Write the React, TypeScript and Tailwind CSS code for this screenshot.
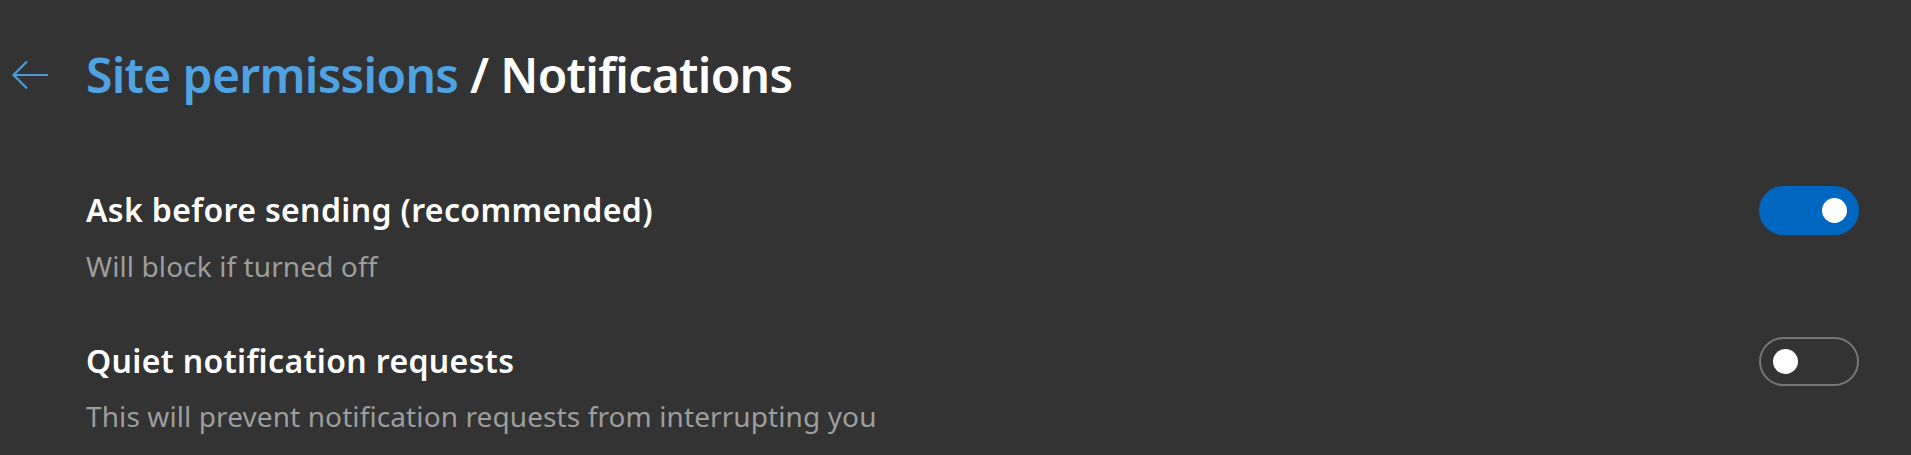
import { useState } from "react";

const font = { fontFamily: '"Noto Sans", "Open Sans", sans-serif' };

function Toggle({ on, onClick }: { on: boolean; onClick: () => void }) {
  return (
    <button
      onClick={onClick}
      className={
        on
          ? "w-[100px] h-[49px] rounded-full bg-[#0067c0] flex items-center justify-end pr-[12px] shrink-0"
          : "w-[100px] h-[49px] rounded-full border-2 border-[#767676] flex items-center justify-start pl-[12px] shrink-0"
      }
    >
      <span className="w-[25px] h-[25px] rounded-full bg-white block" />
    </button>
  );
}

export default function App() {
  const [ask, setAsk] = useState(true);
  const [quiet, setQuiet] = useState(false);

  return (
    <div className="min-h-screen w-full bg-[#333333] overflow-hidden" style={font}>
      {/* header */}
      <div className="flex items-center mt-[43px] h-[64px]">
        <button className="ml-[12px] w-[36px] h-[30px] flex items-center">
          <svg width="36" height="30" viewBox="0 0 36 30" fill="none">
            <path
              d="M1.5 15H36M15 1.5L1.5 15L15 28.5"
              stroke="#4a9ddc"
              strokeWidth="2.2"
            />
          </svg>
        </button>
        <h1 className="ml-[38px] text-[48px] leading-[64px] font-semibold tracking-[-0.7px] whitespace-nowrap">
          <span className="text-[#4fa3e2]">Site permissions</span>
          <span className="text-white"> / Notifications</span>
        </h1>
      </div>

      {/* rows */}
      <div className="pl-[86px] pr-[52px]">
        <div className="mt-[83px]">
          <div className="flex items-center justify-between h-[40px]">
            <p className="text-[32px] leading-[40px] font-semibold tracking-[0.35px] text-white">
              Ask before sending (recommended)
            </p>
            <Toggle on={ask} onClick={() => setAsk(!ask)} />
          </div>
          <p className="mt-[18px] text-[28px] leading-[36px] tracking-[0.1px] text-[#9d9d9d]">
            Will block if turned off
          </p>
        </div>

        <div className="mt-[57px]">
          <div className="flex items-center justify-between h-[40px]">
            <p className="text-[32px] leading-[40px] font-semibold tracking-[0.35px] text-white">
              Quiet notification requests
            </p>
            <Toggle on={quiet} onClick={() => setQuiet(!quiet)} />
          </div>
          <p className="mt-[17px] text-[28px] leading-[36px] tracking-[0.1px] text-[#9d9d9d]">
            This will prevent notification requests from interrupting you
          </p>
        </div>
      </div>
    </div>
  );
}
